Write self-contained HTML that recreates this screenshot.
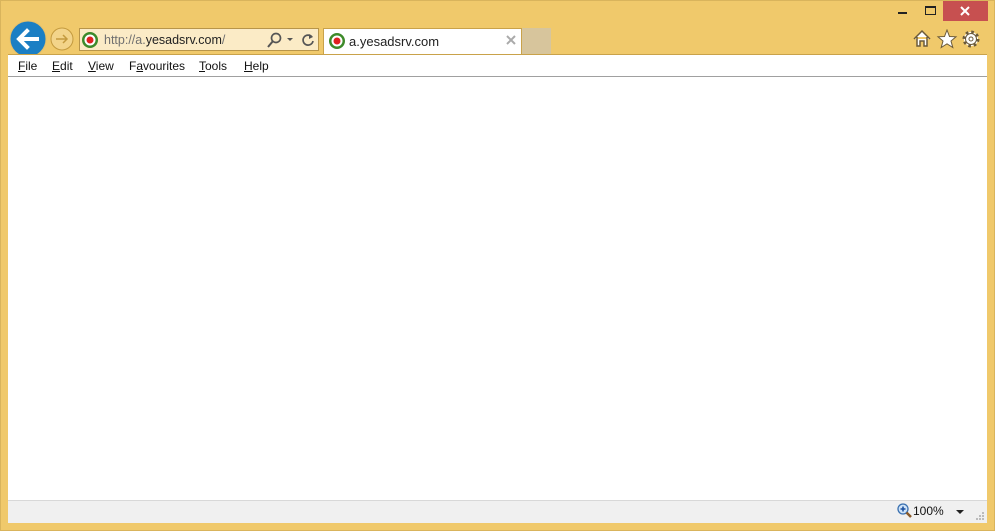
<!DOCTYPE html>
<html><head><style>
body{margin:0;width:995px;height:531px;background:#f0c96b;position:relative;overflow:hidden;font-family:"Liberation Sans",sans-serif;}
.a{position:absolute}
</style></head><body>
<div class="a" style="left:0;top:0;width:995px;height:531px;box-sizing:border-box;border:1px solid #d9b45c;"></div>
<!-- window buttons -->
<div class="a" style="left:898px;top:12px;width:9px;height:2px;background:#222"></div>
<div class="a" style="left:925px;top:6px;width:9px;height:6px;border:1px solid #222;border-top-width:2px"></div>
<div class="a" style="left:943px;top:1px;width:45px;height:20px;background:#c75050;"></div>
<svg class="a" style="left:959px;top:5px" width="12" height="12"><path d="M2 2 L10 10 M10 2 L2 10" stroke="#fff" stroke-width="2"/></svg>
<!-- home/star/gear -->
<svg class="a" style="left:912px;top:29px" width="70" height="20" viewBox="0 0 70 20">
<path d="M2 10 L10 2 L18 10 M5 8 V17 H8 V12 H12 V17 H15 V8" fill="#fff" stroke="#6b5a3a" stroke-width="1.5"/>
<path d="M35 1 L37.5 7.5 L44 7.8 L39 12 L40.8 18.5 L35 14.8 L29.2 18.5 L31 12 L26 7.8 L32.5 7.5Z" fill="#fff" stroke="#6b5a3a" stroke-width="1"/>
<circle cx="59" cy="10" r="7" fill="#fff" stroke="#6b5a3a" stroke-width="3" stroke-dasharray="2.6 2.9"/>
<circle cx="59" cy="10" r="5.5" fill="#fff" stroke="#6b5a3a" stroke-width="1"/>
<circle cx="59" cy="10" r="2" fill="none" stroke="#6b5a3a" stroke-width="1"/>
</svg>
<!-- back/forward -->
<svg class="a" style="left:8px;top:20px" width="70" height="40">
<circle cx="20" cy="19" r="18" fill="#1b7fc4" stroke="#e6c06a" stroke-width="1"/>
<path d="M29 19 H12 M19 11 L11 19 L19 27" stroke="#fff" stroke-width="4" fill="none" stroke-linecap="square"/>
<circle cx="54" cy="19" r="11" fill="#f3d48a" stroke="#c49a3e" stroke-width="1"/>
<path d="M48 19 H59 M55 15 L59 19 L55 23" stroke="#c49a3e" stroke-width="1.5" fill="none"/>
</svg>
<!-- address -->
<div class="a" style="left:79px;top:28px;width:240px;height:23px;box-sizing:border-box;border:1px solid #b8954a;background:#fbebc6"></div>
<svg class="a" style="left:81px;top:31px" width="18" height="18"><circle cx="9" cy="9" r="8" fill="#3d8a2a"/><circle cx="9" cy="9" r="5.5" fill="#fff"/><circle cx="9" cy="9" r="3.5" fill="#e02020"/></svg>
<div class="a" style="left:104px;top:33px;font-size:12.5px;color:#707070">http://a.<span style="color:#222">yesadsrv.com</span>/</div>
<svg class="a" style="left:266px;top:31px" width="52" height="18"><circle cx="10" cy="7" r="4.5" fill="none" stroke="#555" stroke-width="1.7"/><path d="M7 10 L2 16" stroke="#555" stroke-width="2"/><path d="M21 7 L27 7 L24 10Z" fill="#555"/><path d="M46 6 A5 5 0 1 0 47 10" fill="none" stroke="#555" stroke-width="1.7"/><path d="M43 3 L47 6 L43 8Z" fill="#555"/></svg>
<!-- tab -->
<div class="a" style="left:323px;top:28px;width:199px;height:27px;background:#fff;border:1px solid #c9a24a;border-bottom:none;box-sizing:border-box"></div>
<svg class="a" style="left:328px;top:32px" width="18" height="18"><circle cx="9" cy="9" r="8" fill="#3d8a2a"/><circle cx="9" cy="9" r="5.5" fill="#fff"/><circle cx="9" cy="9" r="3.5" fill="#e02020"/></svg>
<div class="a" style="left:349px;top:34px;font-size:13px;color:#222">a.yesadsrv.com</div>
<svg class="a" style="left:506px;top:35px" width="10" height="10"><path d="M1 1 L9 9 M9 1 L1 9" stroke="#aaa" stroke-width="2"/></svg>
<div class="a" style="left:522px;top:28px;width:29px;height:26px;background:#d7c59c"></div>
<!-- menu -->
<div class="a" style="left:8px;top:54px;width:979px;height:23px;background:#fff;border-top:1px solid #c9a24a;border-bottom:1px solid #a0a0a0;box-sizing:border-box"></div>
<div class="a" style="left:18px;top:59px;font-size:12px;color:#111;">
<span style="position:absolute;left:0"><u>F</u>ile</span><span style="position:absolute;left:34px"><u>E</u>dit</span><span style="position:absolute;left:70px"><u>V</u>iew</span><span style="position:absolute;left:111px;white-space:nowrap">F<u>a</u>vourites</span><span style="position:absolute;left:181px"><u>T</u>ools</span><span style="position:absolute;left:226px"><u>H</u>elp</span></div>
<div class="a" style="left:8px;top:77px;width:979px;height:423px;background:#fff"></div>
<!-- status -->
<div class="a" style="left:8px;top:500px;width:979px;height:23px;background:#f0f0f0;border-top:1px solid #d8d8d8;box-sizing:border-box"></div>
<svg class="a" style="left:897px;top:503px" width="16" height="16"><circle cx="6" cy="6" r="5" fill="#cfe3f7" stroke="#3a70b0" stroke-width="1.3"/><path d="M3.5 6 H8.5 M6 3.5 V8.5" stroke="#1a50a0" stroke-width="1.6"/><path d="M9.5 9.5 L14 14" stroke="#8a5a2a" stroke-width="2.5"/></svg>
<div class="a" style="left:913px;top:504px;font-size:12px;color:#111">100%</div>
<div class="a" style="left:956px;top:510px;width:0;height:0;border-left:4px solid transparent;border-right:4px solid transparent;border-top:4px solid #222"></div>
<svg class="a" style="left:976px;top:512px" width="10" height="10"><g fill="#bbb"><rect x="6" y="0" width="2" height="2"/><rect x="3" y="3" width="2" height="2"/><rect x="6" y="3" width="2" height="2"/><rect x="0" y="6" width="2" height="2"/><rect x="3" y="6" width="2" height="2"/><rect x="6" y="6" width="2" height="2"/></g></svg>
</body></html>
